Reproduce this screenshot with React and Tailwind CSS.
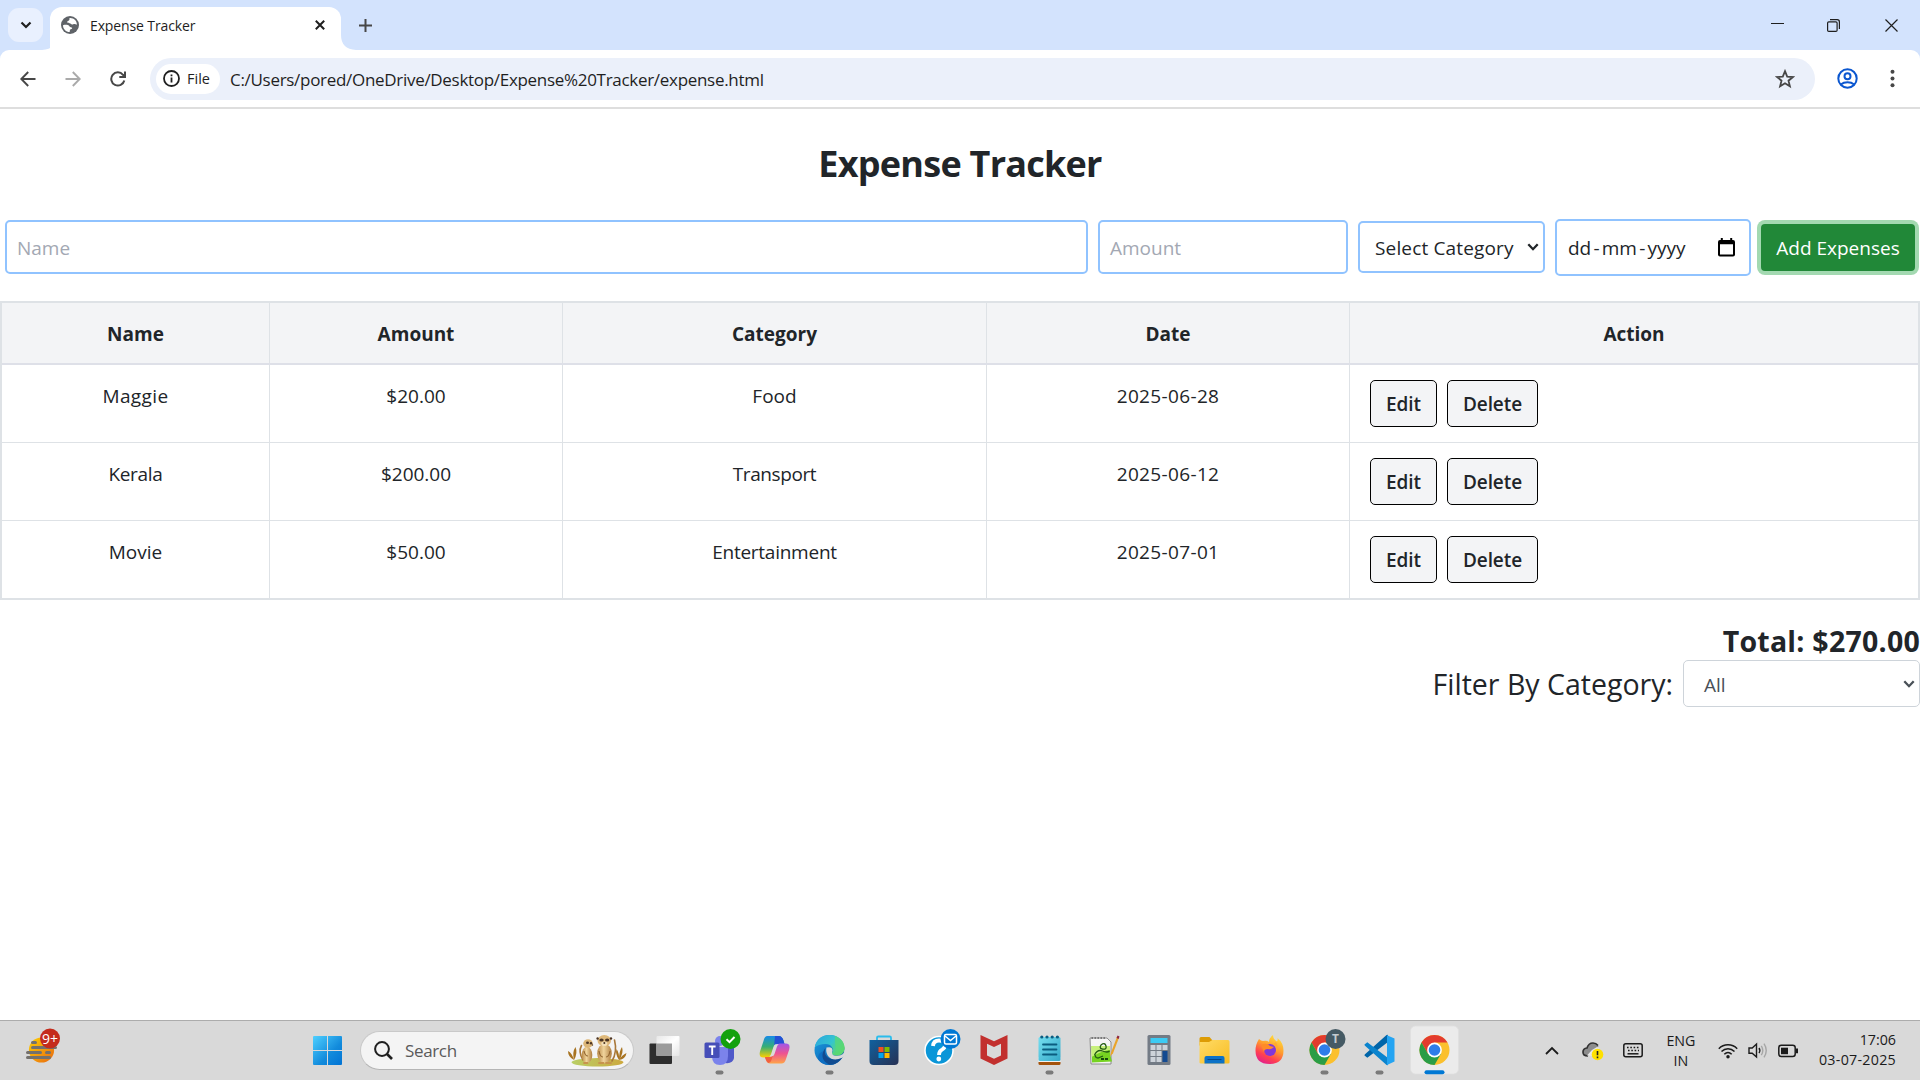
import React from "react";

const expenses = [
  { name: "Maggie", amount: "$20.00", category: "Food", date: "2025-06-28", nameFit: "tracking-[0.4px]", catFit: "" },
  { name: "Kerala", amount: "$200.00", category: "Transport", date: "2025-06-12", nameFit: "tracking-[-0.3px]", catFit: "tracking-[-0.4px]" },
  { name: "Movie", amount: "$50.00", category: "Entertainment", date: "2025-07-01", nameFit: "", catFit: "tracking-[-0.25px]" },
];

const Stroke = ({ w, h, sw = 1.8, className = "", children }) => (
  <svg width={w} height={h} viewBox={`0 0 ${w} ${h}`} fill="none" stroke="currentColor" strokeWidth={sw} className={`block shrink-0 ${className}`}>
    {children}
  </svg>
);

function TabStrip() {
  return (
    <div className="flex h-[50px] bg-[#d3e3fd] pl-2">
      <button className="mt-2 flex h-[34px] w-[35px] items-center justify-center rounded-[11px] bg-[#e9f0fe] text-[#1f1f1f]">
        <Stroke w={12} h={8} sw={2.2}><path d="M1.5 1.5 6 6l4.500-4.500" /></Stroke>
      </button>
      <svg width="15" height="50" viewBox="0 0 15 50" className="ml-[-8px] mr-0 block shrink-0 translate-x-[7px]">
        <path d="M0 50 Q15 49 15 35 V50Z" fill="#fff" />
      </svg>
      <div className="mt-[7px] flex h-[43px] w-[291px] items-center rounded-t-[12px] bg-white pb-[7px] pl-[11px]">
        <svg width="18" height="18" viewBox="0 0 18 18" className="block shrink-0">
          <circle cx="9" cy="9" r="9" fill="#5f6368" />
          <path d="M2 9.200c2.600-.8 5.200-.4 6 .6.800 1.100 1.500 1.500 2.600 1.600.9.100.7 1.500-.2 1.700-1.300.3-1.600.9-1.700 2.900C5 16 2 13 2 9.200Z" fill="#fff" />
          <path d="M8.500 2.100c-.2 1.400.3 1.900-.7 2.400-1.100.5-1.900 1-1.400 2 .5.900 2.200.3 3 1 .9.900 1.700 1.200 2.800.8 1.300-.5 2.400-.2 3.700.4C15.900 4.600 12.600 1.700 8.500 2.100Z" fill="#fff" />
        </svg>
        <span className="ml-[11px] whitespace-nowrap text-[14px] tracking-[-0.12px] text-[#1f1f1f]">Expense Tracker</span>
        <Stroke w={10} h={10} sw={2} className="ml-auto mr-4 text-[#1f1f1f]"><path d="M.8.800l8.400 8.400M9.200.800.800 9.200" /></Stroke>
      </div>
      <svg width="15" height="50" viewBox="0 0 15 50" className="block shrink-0">
        <path d="M0 50V35Q0 49 15 50Z" fill="#fff" />
      </svg>
      <Stroke w={13} h={13} sw={2} className="ml-[3px] mt-[19px] text-[#474747]"><path d="M6.500 0v13M0 6.500h13" /></Stroke>
      <div className="ml-auto flex h-[50px] items-center text-[#1f1f1f]">
        <Stroke w={13} h={1} sw={2} className="mb-[3px] mr-[43px]"><path d="M0 .5h13" /></Stroke>
        <Stroke w={13} h={13} sw={1.200} className="mr-[45px]">
          <rect x=".6" y="2.900" width="9.500" height="9.500" rx="1.200" />
          <path d="M3 .7h7.200a2.200 2.200 0 0 1 2.200 2.200V10" />
        </Stroke>
        <Stroke w={13} h={13} sw={1.200} className="mr-[22px]"><path d="M.5.500l12 12M12.500.500l-12 12" /></Stroke>
      </div>
    </div>
  );
}

function Toolbar() {
  return (
    <div className="bg-[#d3e3fd]">
      <div className="flex h-[57px] items-center rounded-t-[9px] bg-white pl-5">
        <Stroke w={16} h={16} sw={1.900} className="text-[#474747]"><path d="M15.500 8H1.500M8.200 1 1.300 8l6.900 7" /></Stroke>
        <Stroke w={16} h={16} sw={1.900} className="ml-[29px] text-[#aaaaaa]"><path d="M.5 8h14M7.800 1l6.900 7-6.900 7" /></Stroke>
        <Stroke w={16} h={16} sw={2} className="ml-[29px] text-[#474747]">
          <path d="M14.300 9.500A6.600 6.600 0 1 1 13 3.800l1.600 1.700" />
          <path d="M15 .5v5.600H9.300" />
        </Stroke>
        <div className="ml-[24px] flex h-[42px] w-[1665px] items-center rounded-full bg-[#ebf0fa]">
          <div className="ml-[6px] flex h-[30px] w-[64px] items-center rounded-full bg-white pl-[7px] text-[#1f1f1f]">
            <Stroke w={17} h={17} sw={1.800}>
              <circle cx="8.500" cy="8.500" r="7.500" /><path d="M8.500 7.500v5M8.500 4.400v1.800" />
            </Stroke>
            <span className="ml-[7px] text-[14.500px] font-medium">File</span>
          </div>
          <span className="ml-[10px] whitespace-nowrap pt-[2px] text-[17px] tracking-[-0.3px] text-[#1f1f1f]">C:/Users/pored/OneDrive/Desktop/Expense%20Tracker/expense.html</span>
          <Stroke w={20} h={20} sw={1.800} className="ml-auto mr-5 text-[#474747]">
            <path d="M10 2.200l2.200 5.400 5.700.4-4.400 3.700 1.400 5.600L10 14.200l-4.900 3.100 1.400-5.600L2.100 8l5.700-.4Z" />
          </Stroke>
        </div>
        <Stroke w={21} h={21} sw={2} className="ml-[22px] text-[#0b57d0]">
          <circle cx="10.500" cy="10.500" r="9.200" /><circle cx="10.500" cy="8.300" r="3" /><path d="M3.800 16.600c3.600-3 9.800-3 13.400 0" />
        </Stroke>
        <svg width="5" height="19" viewBox="0 0 5 19" className="ml-[32px] block shrink-0" fill="#474747">
          <circle cx="2.500" cy="2.700" r="2" /><circle cx="2.500" cy="9.500" r="2" /><circle cx="2.500" cy="16.300" r="2" />
        </svg>
      </div>
      <div className="h-[2px] bg-[#dedede]" />
    </div>
  );
}

const Caret = ({ className = "" }) => (
  <Stroke w={12} h={8} sw={2.300} className={className}><path d="M1.300 1.300 6 6.200l4.700-4.900" /></Stroke>
);

function ExpenseForm() {
  return (
    <div className="mt-[32px] flex h-[57px] pl-[5px] text-[19px] text-[#212529]">
      <div className="mt-px flex h-[54px] w-[1083px] items-center rounded-[5px] border-2 border-[#90c3ff] pl-[10px] pt-[2px] text-[#a3a8b3]">
        <span>Name</span>
      </div>
      <div className="ml-[10px] mt-px flex h-[54px] w-[250px] items-center rounded-[5px] border-2 border-[#90c3ff] pl-[10px] pt-[2px] text-[#a3a8b3]">
        <span>Amount</span>
      </div>
      <div className="ml-[10px] mt-[2px] flex h-[52px] w-[187px] items-center rounded-[5px] border-2 border-[#90c3ff] pl-[15px]">
        <span className="whitespace-nowrap pt-[3px] tracking-[0.15px]">Select Category</span>
        <Caret className="ml-auto mr-[4px]" />
      </div>
      <div className="ml-[10px] flex h-[57px] w-[196px] items-center rounded-[5px] border-2 border-[#90c3ff] pl-[11px]">
        <div className="flex pt-[2px]">
          <span>dd</span><span className="mx-[2.200px]">-</span><span>mm</span><span className="mx-[2.200px]">-</span><span>yyyy</span>
        </div>
        <svg width="17" height="19" viewBox="0 0 17 19" className="ml-auto mr-[14px] block shrink-0">
          <path fillRule="evenodd" fill="#000" d="M2.800 0h2v2h7.400V0h2v2H15a2 2 0 0 1 2 2v12.500a2 2 0 0 1-2 2H2a2 2 0 0 1-2-2V4a2 2 0 0 1 2-2h.8ZM2 6.300v10.200h13V6.300Z" />
        </svg>
      </div>
      <button className="ml-[10px] mt-[5px] flex h-[47px] w-[154px] items-center justify-center rounded-[4px] bg-[#218838] pt-px text-white ring-4 ring-[#a3d9b1]">
        <span className="whitespace-nowrap">Add Expenses</span>
      </button>
    </div>
  );
}

const Cell = ({ children }) => <div className="flex h-full justify-center border-r border-[#dee2e6] pt-[17px]">{children}</div>;

const Action = ({ children, className }) => (
  <button className={`flex h-[47px] items-center justify-center rounded-[5px] border border-black bg-[#f3f4f6] font-semibold ${className}`}>
    <span>{children}</span>
  </button>
);

function ExpenseTable() {
  return (
    <div className="mt-[25px] border-2 border-[#dee2e6] text-[19px] leading-[28px] text-[#212529]">
      <div className="grid h-[62px] grid-cols-[268px_293px_424px_363px_1fr] border-b-2 border-[#dee0e8] bg-[#f3f4f6] font-bold">
        <Cell><span>Name</span></Cell>
        <Cell><span>Amount</span></Cell>
        <Cell><span>Category</span></Cell>
        <Cell><span>Date</span></Cell>
        <div className="flex justify-center pt-[17px]"><span>Action</span></div>
      </div>
      {expenses.map((e, i) => (
        <div key={e.name} className={`grid grid-cols-[268px_293px_424px_363px_1fr] ${i < 2 ? "h-[78px] border-b border-[#dee2e6]" : "h-[77px]"}`}>
          <Cell><span className={e.nameFit}>{e.name}</span></Cell>
          <Cell><span>{e.amount}</span></Cell>
          <Cell><span className={e.catFit}>{e.category}</span></Cell>
          <Cell><span className="tracking-[0.35px]">{e.date}</span></Cell>
          <div className="flex gap-[10px] pl-5 pt-[15px]">
            <Action className="w-[67px]">Edit</Action>
            <Action className="w-[91px] tracking-[-0.1px]">Delete</Action>
          </div>
        </div>
      ))}
    </div>
  );
}

const Icon = ({ children }) => (
  <svg width="55" height="59" viewBox="0 0 55 59" className="block shrink-0">{children}</svg>
);

const Running = () => <rect x="23.500" y="49.500" width="8" height="4" rx="2" fill="#7b7b7b" />;

const ChromeMark = () => (
  <g>
    <circle cx="27.500" cy="29" r="15" fill="#fbc02d" />
    <path d="M14.500 21.500A15 15 0 0 1 40.500 21.500H27.500L21 32.800Z" fill="#e33b2e" />
    <path d="M14.500 21.500A15 15 0 0 0 27.500 44L34 32.800 21 32.800Z" fill="#2a9d46" />
    <circle cx="27.500" cy="29" r="7.400" fill="#fff" />
    <circle cx="27.500" cy="29" r="5.800" fill="#2f7de9" />
  </g>
);

function SearchBox() {
  return (
    <div className="ml-[18px] flex h-[39px] w-[274px] items-center rounded-full border border-[#c9c9c9] border-b-[#b5b5b5] bg-[#f4f4f4] pl-[13px]">
      <Stroke w={19} h={19} sw={2} className="text-[#1f1f1f]"><circle cx="8" cy="8" r="6.900" /><path d="M13 13l5 5" strokeWidth="2.600" /></Stroke>
      <span className="ml-[12px] text-[17px] tracking-[-0.35px] text-[#5a5a5a]">Search</span>
      <svg width="62" height="33" viewBox="0 0 62 33" className="ml-auto mr-[5px] block shrink-0">
        <defs>
          <linearGradient id="fur" x1="0" x2="1"><stop offset="0" stopColor="#b98846" /><stop offset=".45" stopColor="#f0d49c" /><stop offset="1" stopColor="#b07f40" /></linearGradient>
          <linearGradient id="grass" x1="0" x2="1"><stop offset="0" stopColor="#b9cf66" /><stop offset="1" stopColor="#cda93f" /></linearGradient>
        </defs>
        <ellipse cx="31.500" cy="28.300" rx="26" ry="4.200" fill="url(#grass)" />
        <path d="M8 26Q2 23 2 17q4 2 6 9Q6 18 9.500 13q2.500 6-1.500 13ZM53 26q-4-6-2.500-11 3 4 2.500 11 0-9 3-13 2 6-3 13 3-5 7.500-7-1 6-7.500 7Z" fill="#a87422" />
        <path d="M17 26Q12 18 15.500 11.500M46 27q5.500-9 2.500-21" stroke="#a9783a" strokeWidth="1.600" fill="none" strokeLinecap="round" />
        <ellipse cx="21" cy="21" rx="5.300" ry="8.300" fill="url(#fur)" />
        <ellipse cx="22" cy="9.500" rx="4.800" ry="4.300" fill="#dcb678" />
        <ellipse cx="38.500" cy="19.500" rx="7.300" ry="9.800" fill="url(#fur)" />
        <ellipse cx="38.300" cy="6.600" rx="6.800" ry="5.600" fill="#dfb97b" />
        <ellipse cx="38.300" cy="9.800" rx="3" ry="2.300" fill="#f3dfb8" />
        <g fill="#4b3423">
          <ellipse cx="35.500" cy="6" rx="2.200" ry="1.600" /><ellipse cx="41.200" cy="6" rx="2.200" ry="1.600" /><circle cx="38.300" cy="9" r="1" />
          <circle cx="31.600" cy="4.500" r="1.200" /><circle cx="45" cy="4.500" r="1.200" /><ellipse cx="21.500" cy="8.800" rx="1.500" ry="1.200" /><circle cx="25" cy="9.200" r="1.200" /><circle cx="26.500" cy="11" r=".7" />
        </g>
        <path d="M33 17q1 6 4 6M44 17q-1 6-4 6M18 17q1 5 4 5" stroke="#946732" strokeWidth="1.200" fill="none" />
        <path d="M33 29h4.500M40 29H45M18 29h3.500" stroke="#c7944e" strokeWidth="1.800" strokeLinecap="round" />
      </svg>
    </div>
  );
}

function TaskbarApps() {
  return (
    <div className="ml-[2.500px] flex h-[59px]">
      <Icon>
        <defs>
          <linearGradient id="tvw" x1="0" y1="0" x2="1" y2="1"><stop offset="0" stopColor="#e8e8e8" /><stop offset=".5" stopColor="#fff" /><stop offset="1" stopColor="#e5e5e5" /></linearGradient>
        </defs>
        <rect x="12.500" y="22.500" width="22.500" height="20.500" rx="1" fill="#2d2d2d" />
        <rect x="19.500" y="15" width="23" height="20" rx="1" fill="url(#tvw)" />
        <rect x="19.500" y="22.500" width="15.500" height="12.500" fill="#9b9b9b" />
      </Icon>
      <Icon>
        <circle cx="38" cy="21" r="4" fill="#5059c9" /><circle cx="28" cy="20" r="5" fill="#7b83eb" />
        <path d="M33 26h9v11q-1 6-9 5Z" fill="#5059c9" />
        <path d="M20 26h16v9q0 9-8 9t-8-9Z" fill="#7b83eb" />
        <rect x="12.500" y="21.500" width="15" height="15.500" rx="1.500" fill="#464eb8" />
        <path d="M16.800 25.500h6.800M20.200 25.500v8.500" stroke="#fff" strokeWidth="1.900" />
        <circle cx="38.500" cy="18" r="10" fill="#13a10e" />
        <path d="M34.500 18.300l3 2.900 5-5.200" stroke="#fff" strokeWidth="2" fill="none" />
        <Running />
      </Icon>
      <Icon>
        <defs>
          <linearGradient id="cpa" x1="0" y1="0" x2="0" y2="1"><stop offset="0" stopColor="#178be8" /><stop offset=".5" stopColor="#36ae74" /><stop offset="1" stopColor="#ffd000" /></linearGradient>
          <linearGradient id="cpb" x1="0" y1="0" x2="0" y2="1"><stop offset="0" stopColor="#a056e8" /><stop offset=".5" stopColor="#ee5391" /><stop offset="1" stopColor="#ffa447" /></linearGradient>
        </defs>
        <path d="M20.500 15H32q3 0 4.500 4.500l1 3.500H31q-3 0-4 3l-2.500 7.500q-1 3-4 3h-4q-5 0-3.500-6l3.500-10.500Q17.500 15 20.500 15Z" fill="url(#cpa)" />
        <path d="M28 15h4q3 0 4.500 4.500l1 3.500H31q-2.500 0-4 3Z" fill="#2450d5" />
        <path d="M34.500 42.500H23q-3 0-4.500-5l-.500-1.500h5q2.500 0 3.500-3l2.700-8q.9-2.500 3.500-2.500h6.500q4.500 0 3 6L39 38q-1.300 4.500-4.500 4.500Z" fill="url(#cpb)" />
        <path d="M18 36h5q2 0 3-2l-1.500 5q-1 3-3 3-2-1-3-4Z" fill="#f1603f" />
        <path d="M28.500 23.300h3.300q-1.300.6-1.900 2.400l-2.400 7.300q-.8 2.300-2.500 2.300h-2.800q1.300-.6 1.900-2.400l2.400-7.200q.7-2.100 2-2.400Z" fill="#dcdadb" />
      </Icon>
      <Icon>
        <defs>
          <linearGradient id="eda" x1="0" y1="0" x2="1" y2=".5"><stop offset="0" stopColor="#2aa5e0" /><stop offset=".6" stopColor="#35c4cf" /><stop offset="1" stopColor="#62da5e" /></linearGradient>
          <linearGradient id="edb" x1="0" y1="0" x2="1" y2="1"><stop offset="0" stopColor="#1b9de2" /><stop offset="1" stopColor="#0b56a5" /></linearGradient>
        </defs>
        <circle cx="27.500" cy="29" r="15" fill="url(#edb)" />
        <path d="M12.800 26.500C14 18 20 14 27.500 14 37 14 42.500 20.500 42.500 27c0 5-3.700 7.500-8 7.500-3.500 0-5.300-1.300-4.300-3 2-3.600-.7-8.500-6.700-8.500-4.700 0-8.700 1.200-10.700 3.500Z" fill="url(#eda)" />
        <path d="M22 30q-1 12 11 13.200-12 3-17-5.200 0-7 6-8Z" fill="#0f6fc2" />
        <path d="M23.500 27c-3 9 5 14 16.500 9.500-3 5.500-9 8-13 7-8-4-8-11-3.500-16.500Z" fill="#114c91" />
        <path d="M24.500 26.500q6-1.500 6 3-1.500 3.500 1.500 5Q43 36 42.500 28l2 5-4.300 3.800Q31 41 26 35q-2.500-4-1.500-8.500Z" fill="#d9d9d9" />
        <path d="M33 14.900C39 16.700 42.500 21.500 42.500 27c0 5-3.700 7.500-8 7.500 0-5-2-10-1.500-19.600Z" fill="#57d779" opacity=".75" />
        <Running />
      </Icon>
      <Icon>
        <defs><linearGradient id="sto" x1="0" y1="0" x2="1" y2="1"><stop offset="0" stopColor="#10619f" /><stop offset="1" stopColor="#273154" /></linearGradient></defs>
        <path d="M20 20v-3.200q0-1.300 1.300-1.300h11.400q1.300 0 1.300 1.300V20" stroke="#2bbcec" strokeWidth="1.800" fill="none" />
        <path d="M12.500 19h29v21q0 4-4 4h-21q-4 0-4-4Z" fill="url(#sto)" />
        <path d="M21.500 26h5v5h-5Z" fill="#f25022" /><path d="M27.500 26h5v5h-5Z" fill="#7fba00" />
        <path d="M21.500 32h5v5h-5Z" fill="#00a4ef" /><path d="M27.500 32h5v5h-5Z" fill="#ffb900" />
      </Icon>
      <Icon>
        <circle cx="27" cy="29.500" r="14" fill="#0a96d8" stroke="#fff" strokeWidth="1.500" />
        <path d="M21 25q.5-5.500 6-5.500 6 0 6 4.800 0 2.700-3 4.300-3 1.500-3 5.400" stroke="#fff" strokeWidth="3.800" fill="none" />
        <circle cx="26.800" cy="38" r="2.400" fill="#fff" />
        <circle cx="38.500" cy="18" r="10" fill="#0078d4" />
        <rect x="32.500" y="13.500" width="12" height="9.500" rx="1.500" fill="none" stroke="#fff" strokeWidth="1.500" />
        <path d="M33 15l5.500 4.500L44 15" stroke="#fff" strokeWidth="1.500" fill="none" />
      </Icon>
      <Icon>
        <path fillRule="evenodd" fill="#c2302e" d="M13.500 14 27 20.300 40.500 14v23.500L27 44l-13.500-6.500ZM20 22.800v11.800l7 3.200 7-3.200V22.800l-7 3.300Z" />
      </Icon>
      <Icon>
        <defs><linearGradient id="npd" x1="0" y1="0" x2="1" y2="1"><stop offset="0" stopColor="#75def0" /><stop offset="1" stopColor="#35a9c9" /></linearGradient></defs>
        <path d="M16.500 36h22v5h-22Z" fill="#f2f2f2" /><path d="M16.500 41h22v1.500q0 1.500-1.500 1.500H18q-1.500 0-1.500-1.500Z" fill="#a3520c" />
        <rect x="16.500" y="16" width="22" height="24" rx="1.500" fill="url(#npd)" />
        <path d="M21 23.500h13.500M21 28.500h13.500M21 33.500h13.500" stroke="#0b5d80" strokeWidth="1.800" strokeLinecap="round" />
        <g fill="#0b5d80"><circle cx="19.800" cy="16" r="1.600" /><circle cx="25" cy="16" r="1.600" /><circle cx="30.200" cy="16" r="1.600" /><circle cx="35.400" cy="16" r="1.600" /></g>
        <Running />
      </Icon>
      <Icon>
        <path d="M13 17h17l4 4v22H14Z" fill="#f5f5f5" stroke="#8b8b8b" strokeWidth="1" />
        <path d="M14.500 17h15" stroke="#777" strokeWidth="2" strokeDasharray="1.500 1.500" />
        <path d="M14.500 25h18.500v8l2 7.500-20 1Z" fill="#76d321" />
        <path d="M14.500 25H33v4q-9 1-18.500 7Z" fill="#c7f07b" />
        <path d="M17.500 34q3-6 8-4t7 0M24 24q4-3 5 1t-4 3q-3-1-1-4Zm-6 9q0 4 3 4l5-2" stroke="#235c14" strokeWidth="1.300" fill="none" />
        <path d="M24 38h8" stroke="#164c0c" strokeWidth="2.200" strokeDasharray="3 1" />
        <path d="M33 35.500l1-4L40 16l2 .8-6 15.500Z" fill="#eaa42a" /><path d="M39.500 17l1-2.500 2 .9-.9 2.500Z" fill="#8f2740" />
      </Icon>
      <Icon>
        <rect x="15.500" y="14" width="23" height="30" rx="1.500" fill="#737b85" />
        <rect x="18.500" y="17" width="17" height="5" fill="#3ccbf4" />
        <path d="M18.500 24h5v5h-5ZM24.500 24h5v5h-5ZM30.500 24h5v5h-5ZM18.500 30h5v5h-5ZM24.500 30h5v5h-5ZM18.500 36h5v5h-5ZM24.500 36h5v5h-5Z" fill="#cdd3da" />
        <rect x="30.500" y="30" width="5" height="11" fill="#134a91" />
      </Icon>
      <Icon>
        <defs><linearGradient id="fol" x1="0" y1="0" x2="1" y2="1"><stop offset="0" stopColor="#ffdb66" /><stop offset="1" stopColor="#f8bd23" /></linearGradient></defs>
        <path d="M12.500 17.500q0-1.500 1.500-1.500h8.500l3 3.500h10v5h-23Z" fill="#dd9c05" />
        <path d="M12.500 21h9.500l3.500-2h15.500q1.500 0 1.500 1.500v21q0 1-1.500 1H14q-1.500 0-1.500-1Z" fill="url(#fol)" />
        <path d="M17.500 42.500V37q0-2 2-2h16q2 0 2 2v5.500Z" fill="#0d72c7" /><path d="M20.500 38.500h14" stroke="#064888" strokeWidth="1" />
      </Icon>
      <Icon>
        <defs>
          <linearGradient id="ffx" x1=".8" y1="0" x2=".3" y2="1"><stop offset="0" stopColor="#ffe63d" /><stop offset=".45" stopColor="#ff9a2e" /><stop offset=".75" stopColor="#ff4050" /><stop offset="1" stopColor="#e3208c" /></linearGradient>
        </defs>
        <path d="M17 18q2 2 4 2 4-1 6 1 0-4 4-7 0 4 4 6.500 1-1.500.5-3.500 6 5 6 12.500 0 13.500-14 13.500t-14-13.500q0-6 3.500-11.500Z" fill="url(#ffx)" />
        <circle cx="28" cy="29" r="6" fill="#8137d8" />
        <path d="M19 24q6-3 9 1l4 1q-3 3-6 2-4 0-4 3-2-4-3-7Z" fill="#ff8a28" />
        <path d="M31 23q4 3 3 8 3-5 0-10Z" fill="#ffa92f" />
      </Icon>
      <Icon>
        <ChromeMark />
        <circle cx="38.500" cy="18" r="10" fill="#455a64" />
        <text x="38.500" y="22.300" textAnchor="middle" fill="#c3cbd0" className="text-[12px] font-bold">T</text>
        <Running />
      </Icon>
      <Icon>
        <path d="M12.500 34.500l2.800 2.200L36 21V14q-1-.5-2.300.8L13 33.300q-.8.700-.5 1.200Z" fill="#0065a9" />
        <path d="M12.500 23.500l2.800-2.200L36 37v7q-1 .5-2.300-.8L13 24.700q-.8-.7-.5-1.200Z" fill="#0b84ce" />
        <path d="M35 14.200l7.500 3.300v23L35 44Z" fill="#24a4f2" />
        <Running />
      </Icon>
      <Icon>
        <rect x="3.500" y="5" width="48" height="48" rx="5" fill="#ebebeb" stroke="#e0e0e0" strokeWidth=".8" />
        <ChromeMark />
        <rect x="17.500" y="49.300" width="20" height="4" rx="2" fill="#0078d4" />
      </Icon>
    </div>
  );
}

function Tray() {
  return (
    <div className="ml-auto flex h-[59px] items-center text-[14.250px] leading-[20px] text-[#1b1b1b]">
      <Stroke w={14} h={9} sw={1.800}><path d="M1 8l6-6 6 6" /></Stroke>
      <svg width="22" height="20" viewBox="0 0 22 20" className="ml-[23px] block shrink-0">
        <path d="M5 15q-4 0-4-4 0-3.500 4-4 1.500-5 6-5 4 0 5.500 3.500L6 15Z" fill="#8d8d8d" />
        <path d="M6 15q-5 0-5-4 0-3.500 4-4 1.500-5 6-5 3 0 5 2.500" stroke="#333" strokeWidth="1.700" fill="none" />
        <path d="M5 14.500 10 9l5-3 2 1-5 8Z" fill="#e8e8e8" />
        <circle cx="15.500" cy="13.500" r="5.800" fill="#ffe100" /><path d="M15.500 10v4.300M15.500 15.600v1.700" stroke="#222" strokeWidth="1.600" />
      </svg>
      <Stroke w={20} h={15} sw={1.500} className="ml-[19px]">
        <rect x=".8" y=".8" width="18.400" height="13" rx="2" /><path d="M4 4.500h12.500M5 7.500h11" strokeDasharray="1.600 1.700" /><path d="M4.500 10.800h11" />
      </Stroke>
      <div className="ml-[23px] flex w-[30px] flex-col items-center"><span>ENG</span><span>IN</span></div>
      <Stroke w={20} h={16} sw={1.500} className="ml-[22px]">
        <path d="M.8 5.800c5-5.300 13.400-5.300 18.400 0M3.500 8.600c3.700-3.800 9.300-3.800 13 0M6.300 11.300c2.200-2.200 5.200-2.200 7.400 0" /><circle cx="10" cy="13.800" r="1" fill="currentColor" />
      </Stroke>
      <Stroke w={20} h={17} sw={1.400} className="ml-[10px]">
        <path d="M1 6h3.200L8.500 2v13L4.200 11.200H1ZM11 6q1.700 2.500 0 5" /><path d="M13.300 3.800q3 4.700 0 9.400M16 1.600q4.500 6.900 0 13.800" stroke="#a6a6a6" />
      </Stroke>
      <Stroke w={21} h={14} sw={1.500} className="ml-[10px]">
        <rect x=".8" y="1.200" width="16.400" height="11.300" rx="2.500" /><path d="M3 3.700h7v6.500H3Z" fill="currentColor" stroke="none" /><path d="M19 4.500v4.800" strokeWidth="2" />
      </Stroke>
      <div className="mb-[2px] ml-[20px] mr-[24px] flex flex-col items-end"><span>17:06</span><span className="whitespace-nowrap tracking-[0.27px]">03-07-2025</span></div>
    </div>
  );
}

function Taskbar() {
  return (
    <div className="mt-auto flex h-[60px] items-center border-t border-[#acacac] bg-[#d9d9d9]">
      <svg width="40" height="59" viewBox="0 0 40 59" className="ml-[24px] block shrink-0">
        <defs><linearGradient id="sun" x1="0" y1="0" x2="1" y2="1"><stop offset="0" stopColor="#ffd000" /><stop offset="1" stopColor="#e86812" /></linearGradient></defs>
        <circle cx="17.500" cy="29" r="12.600" fill="url(#sun)" />
        <path d="M8.500 21.500h3M8.500 26.500h23M3.500 31.500h13M22.500 31.500h3M3.500 36.500h22" stroke="#74716d" strokeWidth="3" strokeLinecap="round" />
        <circle cx="26" cy="17.500" r="10" fill="#c42b1c" />
        <text x="26" y="22.600" textAnchor="middle" fontSize="14" fill="#fff">9+</text>
      </svg>
      <svg width="29" height="29" viewBox="0 0 29 29" className="ml-[249px] block shrink-0">
        <defs><linearGradient id="win" gradientUnits="userSpaceOnUse" x1="0" y1="0" x2="29" y2="29"><stop offset="0" stopColor="#4fd0ff" /><stop offset=".6" stopColor="#128bdc" /><stop offset="1" stopColor="#0273d4" /></linearGradient></defs>
        <path d="M1 0h13v14H0V1q0-1 1-1ZM15 0h13q1 0 1 1v13H15ZM0 15h14v14H1q-1 0-1-1ZM15 15h14v13q0 1-1 1H15Z" fill="url(#win)" />
      </svg>
      <SearchBox />
      <TaskbarApps />
      <Tray />
    </div>
  );
}

export default function App() {
  return (
    <div className="flex h-screen w-full flex-col overflow-hidden bg-white font-['Open_Sans','Noto_Sans',sans-serif]">
      <TabStrip />
      <Toolbar />
      <h1 className="mt-[32px] text-center text-[36px] font-bold leading-[46px] tracking-[-0.75px] text-[#212529]"><span>Expense Tracker</span></h1>
      <ExpenseForm />
      <ExpenseTable />
      <div className="mt-[21px] flex flex-col items-end text-[28.500px] leading-[40px] text-[#212529]">
        <span className="font-bold tracking-[0.25px]">Total: $270.00</span>
        <div className="-mt-px flex items-center">
          <span className="whitespace-nowrap">Filter By Category:</span>
          <div className="ml-[10px] flex h-[47px] w-[237px] items-center rounded-[5px] border border-[#ced4da] pl-5 text-[19px] text-[#495057]">
            <span className="pt-[2px]">All</span>
            <Caret className="ml-auto mr-[4px]" />
          </div>
        </div>
      </div>
      <Taskbar />
    </div>
  );
}
